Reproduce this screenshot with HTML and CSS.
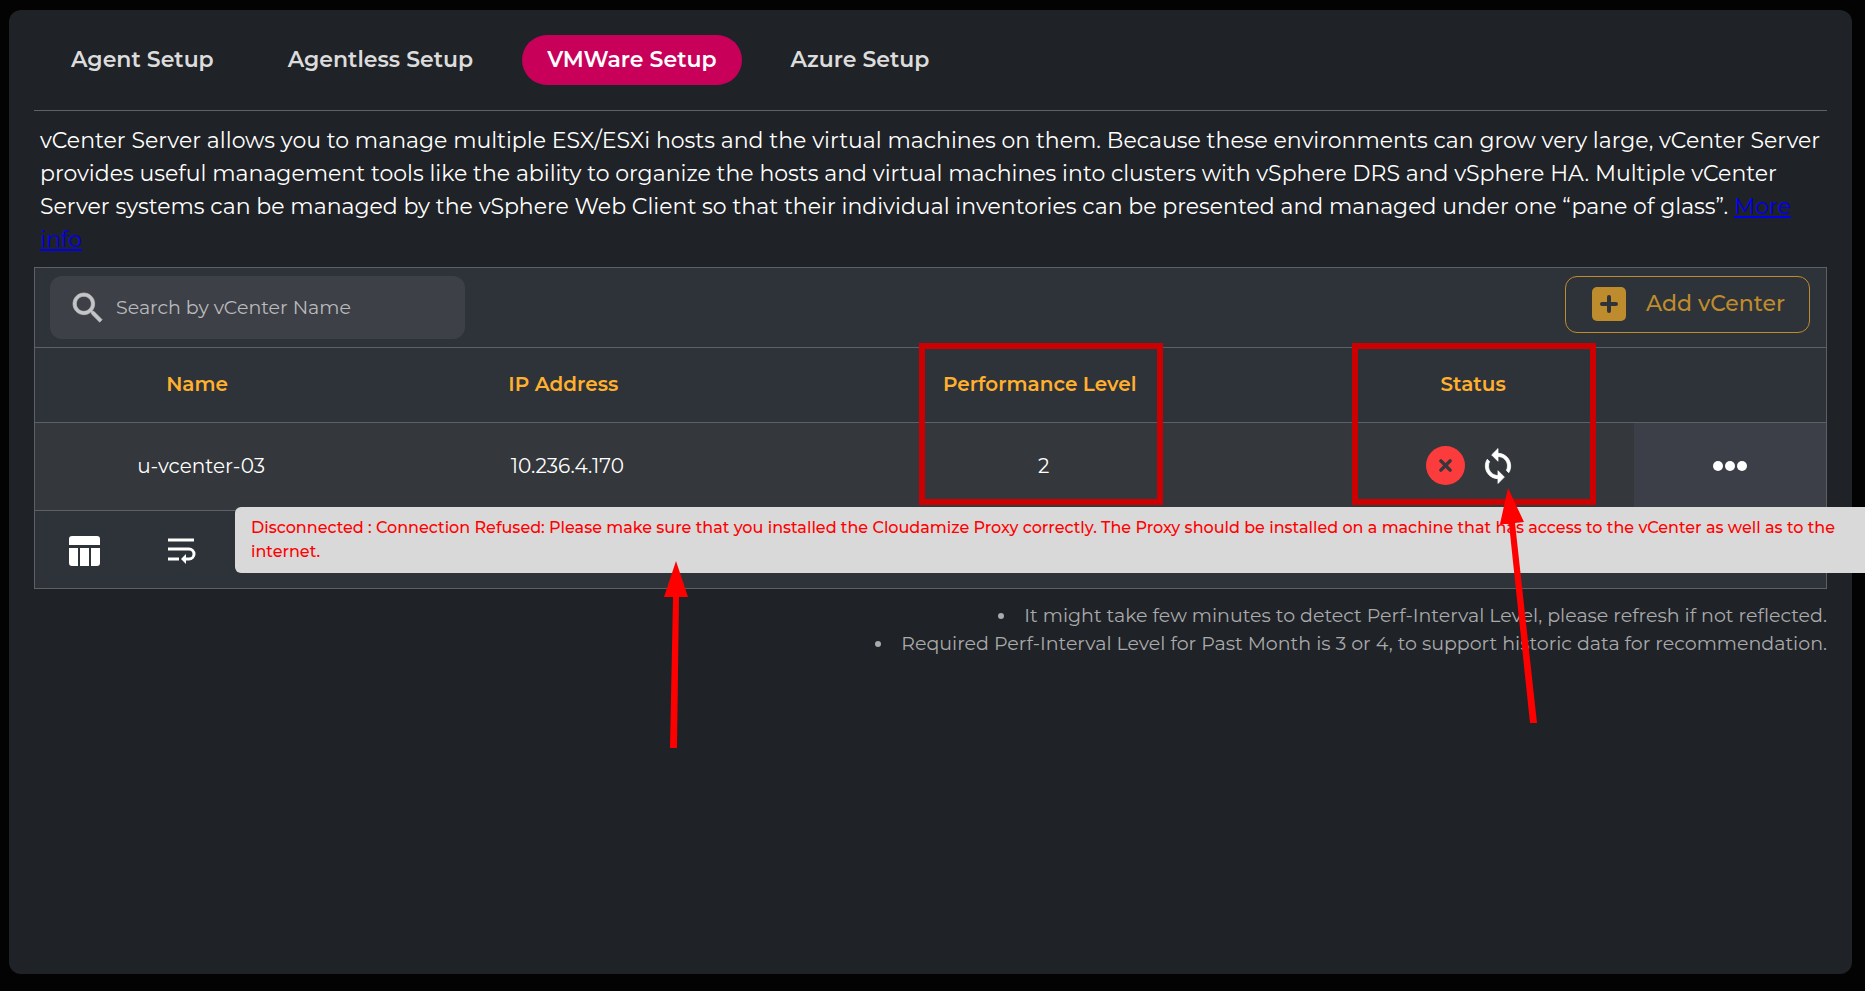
FILE: index.html
```html
<!DOCTYPE html>
<html lang="en">

<head>
    <meta charset="UTF-8">
    <meta name="viewport" content="width=device-width, initial-scale=1.0">
    <title>VMWare Setup</title>
    <link rel="stylesheet" href="styles.css">
</head>

<body>
    <main class="panel">
        <nav class="tabs">
            <button type="button" class="tab">Agent Setup</button>
            <button type="button" class="tab">Agentless Setup</button>
            <button type="button" class="tab active">VMWare Setup</button>
            <button type="button" class="tab">Azure Setup</button>
        </nav>

        <p class="intro">vCenter Server allows you to manage multiple ESX/ESXi hosts and the virtual machines on them. Because these environments can grow very large, vCenter Server provides useful management tools like the ability to organize the hosts and virtual machines into clusters with vSphere DRS and vSphere HA. Multiple vCenter Server systems can be managed by the vSphere Web Client so that their individual inventories can be presented and managed under one “pane of glass”. <a href="#">More info</a></p>

        <section class="card">
            <div class="toolbar">
                <label class="search">
                    <svg width="40" height="40" viewBox="0 0 24 24" fill="currentColor" stroke="currentColor" stroke-width=".4" aria-hidden="true">
                        <path d="M15.5 14h-.79l-.28-.27C15.41 12.59 16 11.11 16 9.5 16 5.91 13.09 3 9.5 3S3 5.91 3 9.5 5.91 16 9.5 16c1.61 0 3.09-.59 4.23-1.57l.27.28v.79l5 4.99L20.49 19l-4.99-5zm-6 0C7.01 14 5 11.99 5 9.5S7.01 5 9.5 5 14 7.01 14 9.5 11.99 14 9.5 14z"/>
                    </svg>
                    <input type="text" placeholder="Search by vCenter Name" aria-label="Search by vCenter Name">
                </label>
                <button type="button" class="add-button">
                    <svg width="34" height="34" viewBox="0 0 34 34" aria-hidden="true">
                        <rect width="34" height="34" rx="5" fill="currentColor"/>
                        <path d="M17 10v14M10 17h14" stroke="#2e3239" stroke-width="4" stroke-linecap="round"/>
                    </svg>
                    Add vCenter
                </button>
            </div>

            <table class="vcenters">
                <thead>
                    <tr>
                        <th class="col-name">Name</th>
                        <th class="col-ip">IP Address</th>
                        <th class="col-perf">Performance Level<span class="highlight"></span></th>
                        <th class="col-status">Status<span class="highlight"></span></th>
                        <th class="col-actions"></th>
                    </tr>
                </thead>
                <tbody>
                    <tr>
                        <td>u-vcenter-03</td>
                        <td>10.236.4.170</td>
                        <td>2</td>
                        <td>
                            <div class="status">
                                <svg width="39" height="39" viewBox="0 0 38 38" role="img" aria-label="Disconnected">
                                    <circle cx="19" cy="19" r="19" fill="#fc3b3c"/>
                                    <path d="M14.5 14.5l9 9M23.5 14.5l-9 9" stroke="#34373b" stroke-width="3.4" stroke-linecap="round"/>
                                </svg>
                                <button type="button" class="icon-button" aria-label="Refresh status">
                                    <svg width="38" height="38" viewBox="0 0 24 24" fill="currentColor" stroke="currentColor" stroke-width=".5">
                                        <path d="M12 4V1L8 5l4 4V6c3.31 0 6 2.69 6 6 0 1.01-.25 1.97-.7 2.8l1.46 1.46C19.54 15.03 20 13.57 20 12c0-4.42-3.58-8-8-8zm0 14c-3.31 0-6-2.69-6-6 0-1.01.25-1.97.7-2.8L5.24 7.74C4.46 8.97 4 10.43 4 12c0 4.42 3.58 8 8 8v3l4-4-4-4v3z"/>
                                    </svg>
                                </button>
                                <svg class="arrow status-arrow" width="40" height="240" viewBox="0 0 40 240" fill="#f00" aria-hidden="true">
                                    <path d="M9 1L25 35 16 36 38 236H31L10 37 1 37z"/>
                                </svg>
                            </div>
                        </td>
                        <td class="actions">
                            <button type="button" class="icon-button" aria-label="More actions">
                                <svg width="34" height="10" viewBox="0 0 34 10" fill="currentColor">
                                    <circle cx="5" cy="5" r="5"/>
                                    <circle cx="17" cy="5" r="5"/>
                                    <circle cx="29" cy="5" r="5"/>
                                </svg>
                            </button>
                        </td>
                    </tr>
                </tbody>
            </table>

            <div class="card-footer">
                <button type="button" class="icon-button" aria-label="Choose columns">
                    <svg width="31" height="30" viewBox="0 0 31 30" fill="currentColor">
                        <path d="M3 0h25a3 3 0 0 1 3 3v6H0V3a3 3 0 0 1 3-3zM0 12h9v18H3a3 3 0 0 1-3-3zM11 12h9v18h-9zM22 12h9v15a3 3 0 0 1-3 3h-6z"/>
                    </svg>
                </button>
                <button type="button" class="icon-button" aria-label="Wrap text">
                    <svg width="28" height="26" viewBox="0 0 28 26" fill="none" stroke="currentColor" stroke-width="3">
                        <path d="M0 2h26M0 11h21a5 5 0 0 1 0 10h-3M0 21h11"/>
                        <path d="M18 16v10l-5-5z" fill="currentColor" stroke="none"/>
                    </svg>
                </button>
                <div class="tooltip" role="tooltip">
                    Disconnected : Connection Refused: Please make sure that you installed the Cloudamize Proxy correctly. The Proxy should be installed on a machine that has access to the vCenter as well as to the internet.
                    <svg class="arrow tooltip-arrow" width="26" height="188" viewBox="0 0 26 188" fill="#f00" aria-hidden="true">
                        <path d="M13 0L25 36H16L14 187H7L10 36H1z"/>
                    </svg>
                </div>
            </div>
        </section>

        <ul class="notes">
            <li>It might take few minutes to detect Perf-Interval Level, please refresh if not reflected.</li>
            <li>Required Perf-Interval Level for Past Month is 3 or 4, to support historic data for recommendation.</li>
        </ul>
    </main>
</body>

</html>
```
FILE: styles.css
```css
* {
    box-sizing: border-box;
}

html {
    overflow-x: hidden;
}

body {
    margin: 0;
    padding: 10px 13px 17px 9px;
    min-height: 100vh;
    display: flex;
    background-color: #030303;
    color: #fff;
    font-family: "Montserrat", "Inter", sans-serif;
    font-size: 20px;
    overflow-x: hidden;
}

button,
input {
    font-family: inherit;
}

button {
    cursor: pointer;
}

.panel {
    flex: 1;
    min-width: 0;
    padding: 25px;
    border-radius: 12px;
    background-color: #1f2226;
}

.tabs {
    display: flex;
    gap: 24px;
    padding: 0 12px 25px;
    border-bottom: 1px solid #5f6265;
}

.tab {
    height: 50px;
    padding: 0 25px 2px;
    border: none;
    border-radius: 25px;
    background: none;
    color: #dcdcdc;
    font-size: 22px;
    font-weight: 600;
}

.tab.active {
    background-color: #c8005a;
    color: #fff;
}

.intro {
    margin: 13px 0 11px;
    padding: 0 6px;
    font-size: 22px;
    line-height: 33px;
}

.intro a {
    color: #0000ee;
}

.card {
    border: 1px solid #5d6064;
    background-color: #2e3239;
}

.toolbar {
    display: flex;
    justify-content: space-between;
    align-items: flex-start;
    padding: 8px 16px 8px 15px;
}

.search {
    display: flex;
    align-items: center;
    gap: 8px;
    width: 415px;
    height: 63px;
    padding: 0 18px;
    border-radius: 12px;
    background-color: #3d4047;
    color: #c4c5c7;
}

.search input {
    flex: 1;
    min-width: 0;
    padding: 0;
    border: none;
    outline: none;
    background: none;
    color: #fff;
    font-size: 19px;
}

.search input::placeholder {
    color: #b9babc;
    opacity: 1;
}

.add-button {
    display: flex;
    align-items: center;
    gap: 20px;
    height: 57px;
    padding: 0 24px 2px 26px;
    border: 1px solid #bf8c2d;
    border-radius: 12px;
    background: none;
    color: #bf8c2d;
    font-size: 22px;
    font-weight: 500;
}

.vcenters {
    width: 100%;
    table-layout: fixed;
    border-collapse: collapse;
}

.vcenters th {
    position: relative;
    height: 75px;
    padding: 0 0 2px;
    border-top: 1px solid #5d6064;
    color: #ffb02e;
    font-size: 20px;
    font-weight: 600;
}

.vcenters td {
    height: 88px;
    padding: 0 0 2px 8px;
    border-top: 1px solid #5d6064;
    border-bottom: 1px solid #5d6064;
    background-color: #34373b;
    text-align: center;
}

.vcenters td.actions {
    padding: 0 0 2px;
    background-color: #3c3f47;
}

.col-name {
    width: 18.1%;
}

.col-ip {
    width: 22.8%;
}

.col-perf {
    width: 30.4%;
}

.col-status {
    width: 18%;
}

.col-actions {
    width: 10.7%;
}

.icon-button {
    display: flex;
    align-items: center;
    justify-content: center;
    padding: 0;
    border: none;
    background: none;
    color: #fff;
}

.actions .icon-button {
    margin: 0 auto;
}

.status {
    position: relative;
    display: flex;
    align-items: center;
    justify-content: center;
    gap: 14px;
    padding-right: 12px;
}

/* red callout boxes around a header and its value */
.highlight {
    position: absolute;
    top: -5px;
    left: calc(50% - 121px);
    width: 244px;
    height: 162px;
    border: 6px solid #c00;
    z-index: 1;
}

.arrow {
    position: absolute;
    z-index: 3;
    pointer-events: none;
}

.status-arrow {
    top: 41px;
    left: calc(50% + 22px);
}

.tooltip-arrow {
    top: 54px;
    left: 428px;
}

.card-footer {
    position: relative;
    display: flex;
    align-items: center;
    gap: 68px;
    height: 77px;
    padding: 2px 34px 0;
}

.tooltip {
    position: absolute;
    top: -4px;
    left: 200px;
    right: -50px;
    z-index: 2;
    padding: 9px 16px;
    border-radius: 6px;
    background-color: #d9d9d9;
    color: #f00;
    font-size: 16px;
    font-weight: 500;
    line-height: 24px;
}

.notes {
    margin: 13px 0 0;
    padding: 0;
    color: #a9aaab;
    font-size: 19px;
    line-height: 28px;
    text-align: right;
    list-style-position: inside;
}
```
